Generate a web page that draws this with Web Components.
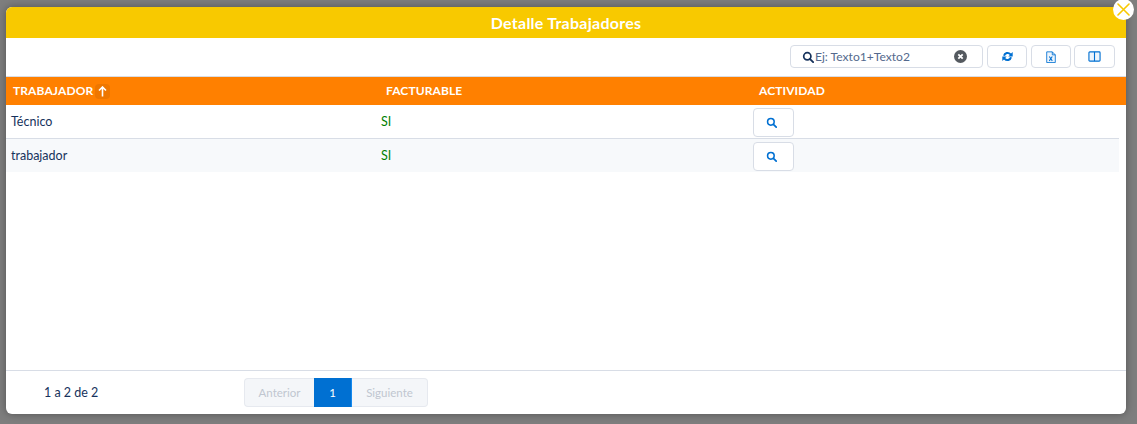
<!DOCTYPE html>
<html lang="es">
<head>
<meta charset="utf-8">
<title>Detalle Trabajadores</title>
<style>
	html, body { margin: 0; height: 100%; }
	body {
		width: 1137px;
		height: 424px;
		overflow: hidden;
		background: #7e7e7e;
		font-family: Lato, "Open Sans", "Liberation Sans", sans-serif;
		color: #16325c;
	}
</style>
</head>
<body>
<detail-modal heading="Detalle Trabajadores">
	<modal-toolbar slot="toolbar"></modal-toolbar>
	<worker-table>
		<worker-row name="Técnico" billable="SI"></worker-row>
		<worker-row name="trabajador" billable="SI" striped></worker-row>
	</worker-table>
	<table-pager slot="footer" summary="1 a 2 de 2"></table-pager>
</detail-modal>

<script>
const ICONS = {
	search: '<circle cx="6.2" cy="6.2" r="4.2" fill="none" stroke="currentColor" stroke-width="2"/><path d="M9.4 9.4l3.6 3.6" stroke="currentColor" stroke-width="2.2" stroke-linecap="round"/>',
	refresh: '<path d="M2.2 6A5 5 0 0 1 10.8 3.8L12.6 2.2V7H7.8L9.5 5.3A3 3 0 0 0 4.3 6.4Z" fill="currentColor"/><path d="M11.8 8A5 5 0 0 1 3.2 10.2L1.4 11.8V7H6.2L4.5 8.7A3 3 0 0 0 9.7 7.6Z" fill="currentColor"/>',
	excel: '<path d="M2 1h6.500l3.500 3.500V13.500H2z" fill="#eef5fc" stroke="currentColor" stroke-width="1"/><path d="M8.500 1v3.500H12" fill="none" stroke="currentColor"/><path d="M5 6.500l3.500 5M8.500 6.500L5 11.500" stroke="currentColor" stroke-width="1.200"/>',
	columns: '<rect x="1" y="2" width="12" height="10" rx="1" fill="#eef5fc" stroke="currentColor" stroke-width="1.200"/><path d="M7 2v10" stroke="currentColor" stroke-width="1.200"/>'
};

function icon(name, size) {
	return `<svg width="${size}" height="${size}" viewBox="0 0 14 14" aria-hidden="true">${ICONS[name]}</svg>`;
}

class DetailModal extends HTMLElement {
	constructor() {
		super();
		let shadowRoot = this.attachShadow({mode: 'open'});
		shadowRoot.innerHTML = `
			<style>
				:host { display: block; padding: 7px 11px 10px 6px; height: 407px; }
				.modal {
					position: relative;
					height: 100%;
					display: flex;
					flex-direction: column;
					background: #fff;
					border-radius: 6px;
					box-shadow: 0 0 8px rgba(0,0,0,.35);
				}
				header {
					flex: none;
					height: 31px;
					background: #f8c900;
					border-radius: 6px 6px 0 0;
					display: flex;
					align-items: center;
					justify-content: center;
					color: #fff;
					font-size: 16px;
					font-weight: 700;
					letter-spacing: .25px;
				}
				.body { flex: 1; min-height: 0; }
				.close {
					position: absolute;
					top: -8px;
					right: -8px;
					width: 21px;
					height: 21px;
					border-radius: 50%;
					background: #fff;
					display: flex;
					align-items: center;
					justify-content: center;
				}
			</style>
			<div class="modal">
				<header>${this.getAttribute('heading')}</header>
				<slot name="toolbar"></slot>
				<div class="body"><slot></slot></div>
				<slot name="footer"></slot>
				<div class="close">
					<svg width="13" height="13" viewBox="0 0 13 13" aria-hidden="true"><path d="M1 1l11 11M12 1L1 12" stroke="#f8c900" stroke-width="1.600" stroke-linecap="round"/></svg>
				</div>
			</div>
		`;
	}
}

class ModalToolbar extends HTMLElement {
	constructor() {
		super();
		let shadowRoot = this.attachShadow({mode: 'open'});
		shadowRoot.innerHTML = `
			<style>
				:host {
					display: flex;
					height: 39px;
					box-sizing: border-box;
					padding: 7px 11px 0 0;
					justify-content: flex-end;
					gap: 4px;
					border-bottom: 1px solid #d8dde6;
				}
				.search, button {
					height: 23px;
					box-sizing: border-box;
					background: #fff;
					border: 1px solid #d8dde6;
					border-radius: 4px;
					display: flex;
					align-items: center;
					justify-content: center;
					padding: 0;
				}
				.search {
					width: 193px;
					justify-content: flex-start;
					padding: 0 15px 0 11px;
					color: #54698d;
					font-size: 12.100px;
				}
				.search .lens { color: #16325c; display: flex; margin-right: 1px; }
				.search span { flex: 1; }
				.search .clear { display: flex; }
				button { color: #0070d2; }
				.refresh { width: 40px; }
				.excel { width: 40px; margin-right: -1px; }
				.cols { width: 41px; }
			</style>
			<div class="search">
				<span class="lens" style="flex:none">${icon('search', 12)}</span>
				<span>Ej: Texto1+Texto2</span>
				<span class="clear" style="flex:none">
					<svg width="13" height="13" viewBox="0 0 13 13" aria-hidden="true"><circle cx="6.500" cy="6.500" r="6.500" fill="#54595f"/><path d="M4.300 4.300l4.400 4.400M8.700 4.300l-4.400 4.400" stroke="#fff" stroke-width="1.800"/></svg>
				</span>
			</div>
			<button class="refresh">${icon('refresh', 13)}</button>
			<button class="excel">${icon('excel', 12)}</button>
			<button class="cols">${icon('columns', 13)}</button>
		`;
	}
}

class WorkerTable extends HTMLElement {
	constructor() {
		super();
		let shadowRoot = this.attachShadow({mode: 'open'});
		shadowRoot.innerHTML = `
			<style>
				:host { display: block; }
				.head {
					height: 28px;
					box-sizing: border-box;
					padding: 0 0 2px 7px;
					background: #ff8000;
					display: grid;
					grid-template-columns: 373px 373px 1fr;
					align-items: center;
					color: #fff;
					font-size: 12px;
					font-weight: 700;
					letter-spacing: .1px;
				}
				.sort { display: flex; align-items: center; }
				.arrow {
					width: 15px;
					height: 15px;
					margin: 1px 0 -1px 2px;
					border-radius: 4px;
					background: #ee7700;
					display: flex;
					align-items: center;
					justify-content: center;
				}
				.rows { padding-right: 7px; }
			</style>
			<div class="head">
				<div class="sort">TRABAJADOR
					<span class="arrow"><svg width="9" height="11" viewBox="0 0 9 11" aria-hidden="true"><path d="M4.500 10.500V2M1 4.500l3.500-3.500 3.500 3.500" fill="none" stroke="#fff" stroke-width="1.600"/></svg></span>
				</div>
				<div>FACTURABLE</div>
				<div>ACTIVIDAD</div>
			</div>
			<div class="rows"><slot></slot></div>
		`;
	}
}

class WorkerRow extends HTMLElement {
	constructor() {
		super();
		let shadowRoot = this.attachShadow({mode: 'open'});
		shadowRoot.innerHTML = `
			<style>
				:host {
					display: grid;
					grid-template-columns: 370px 372px 1fr;
					align-items: center;
					height: 33px;
					padding-left: 5px;
					font-size: 12.500px;
					color: #16325c;
					border-bottom: 1px solid #d8dde6;
				}
				:host([striped]) { background: #f7f9fb; border-bottom: 0; }
				.ok { color: #008000; }
				.action { align-self: start; padding-top: 3px; }
				button {
					width: 41px;
					height: 29px;
					box-sizing: border-box;
					background: #fff;
					border: 1px solid #d8dde6;
					border-radius: 4px;
					color: #0070d2;
					display: flex;
					align-items: center;
					justify-content: center;
					padding: 0 4px 0 0;
				}
			</style>
			<div>${this.getAttribute('name')}</div>
			<div class="ok">${this.getAttribute('billable')}</div>
			<div class="action"><button>${icon('search', 11)}</button></div>
		`;
	}
}

class TablePager extends HTMLElement {
	constructor() {
		super();
		let shadowRoot = this.attachShadow({mode: 'open'});
		shadowRoot.innerHTML = `
			<style>
				:host {
					display: flex;
					align-items: center;
					height: 44px;
					box-sizing: border-box;
					border-top: 1px solid #d8dde6;
					font-size: 12.500px;
					color: #16325c;
				}
				.summary { width: 238px; padding-left: 38px; box-sizing: border-box; }
				.pages { display: flex; height: 29px; font-size: 11.500px; }
				.pages div {
					display: flex;
					align-items: center;
					justify-content: center;
					box-sizing: border-box;
				}
				.off {
					background: #f4f6f9;
					border: 1px solid #e6e9ef;
					color: #c0c6d0;
				}
				.prev { width: 70px; border-radius: 4px 0 0 4px; border-right: 0; }
				.next { width: 76px; border-radius: 0 4px 4px 0; border-left: 0; }
				.current { width: 38px; background: #0070d2; color: #fff; border-right: 1px solid #1589ee; }
			</style>
			<div class="summary">${this.getAttribute('summary')}</div>
			<div class="pages">
				<div class="off prev">Anterior</div>
				<div class="current">1</div>
				<div class="off next">Siguiente</div>
			</div>
		`;
	}
}

window.customElements.define('detail-modal', DetailModal);
window.customElements.define('modal-toolbar', ModalToolbar);
window.customElements.define('worker-table', WorkerTable);
window.customElements.define('worker-row', WorkerRow);
window.customElements.define('table-pager', TablePager);
</script>
</body>
</html>
